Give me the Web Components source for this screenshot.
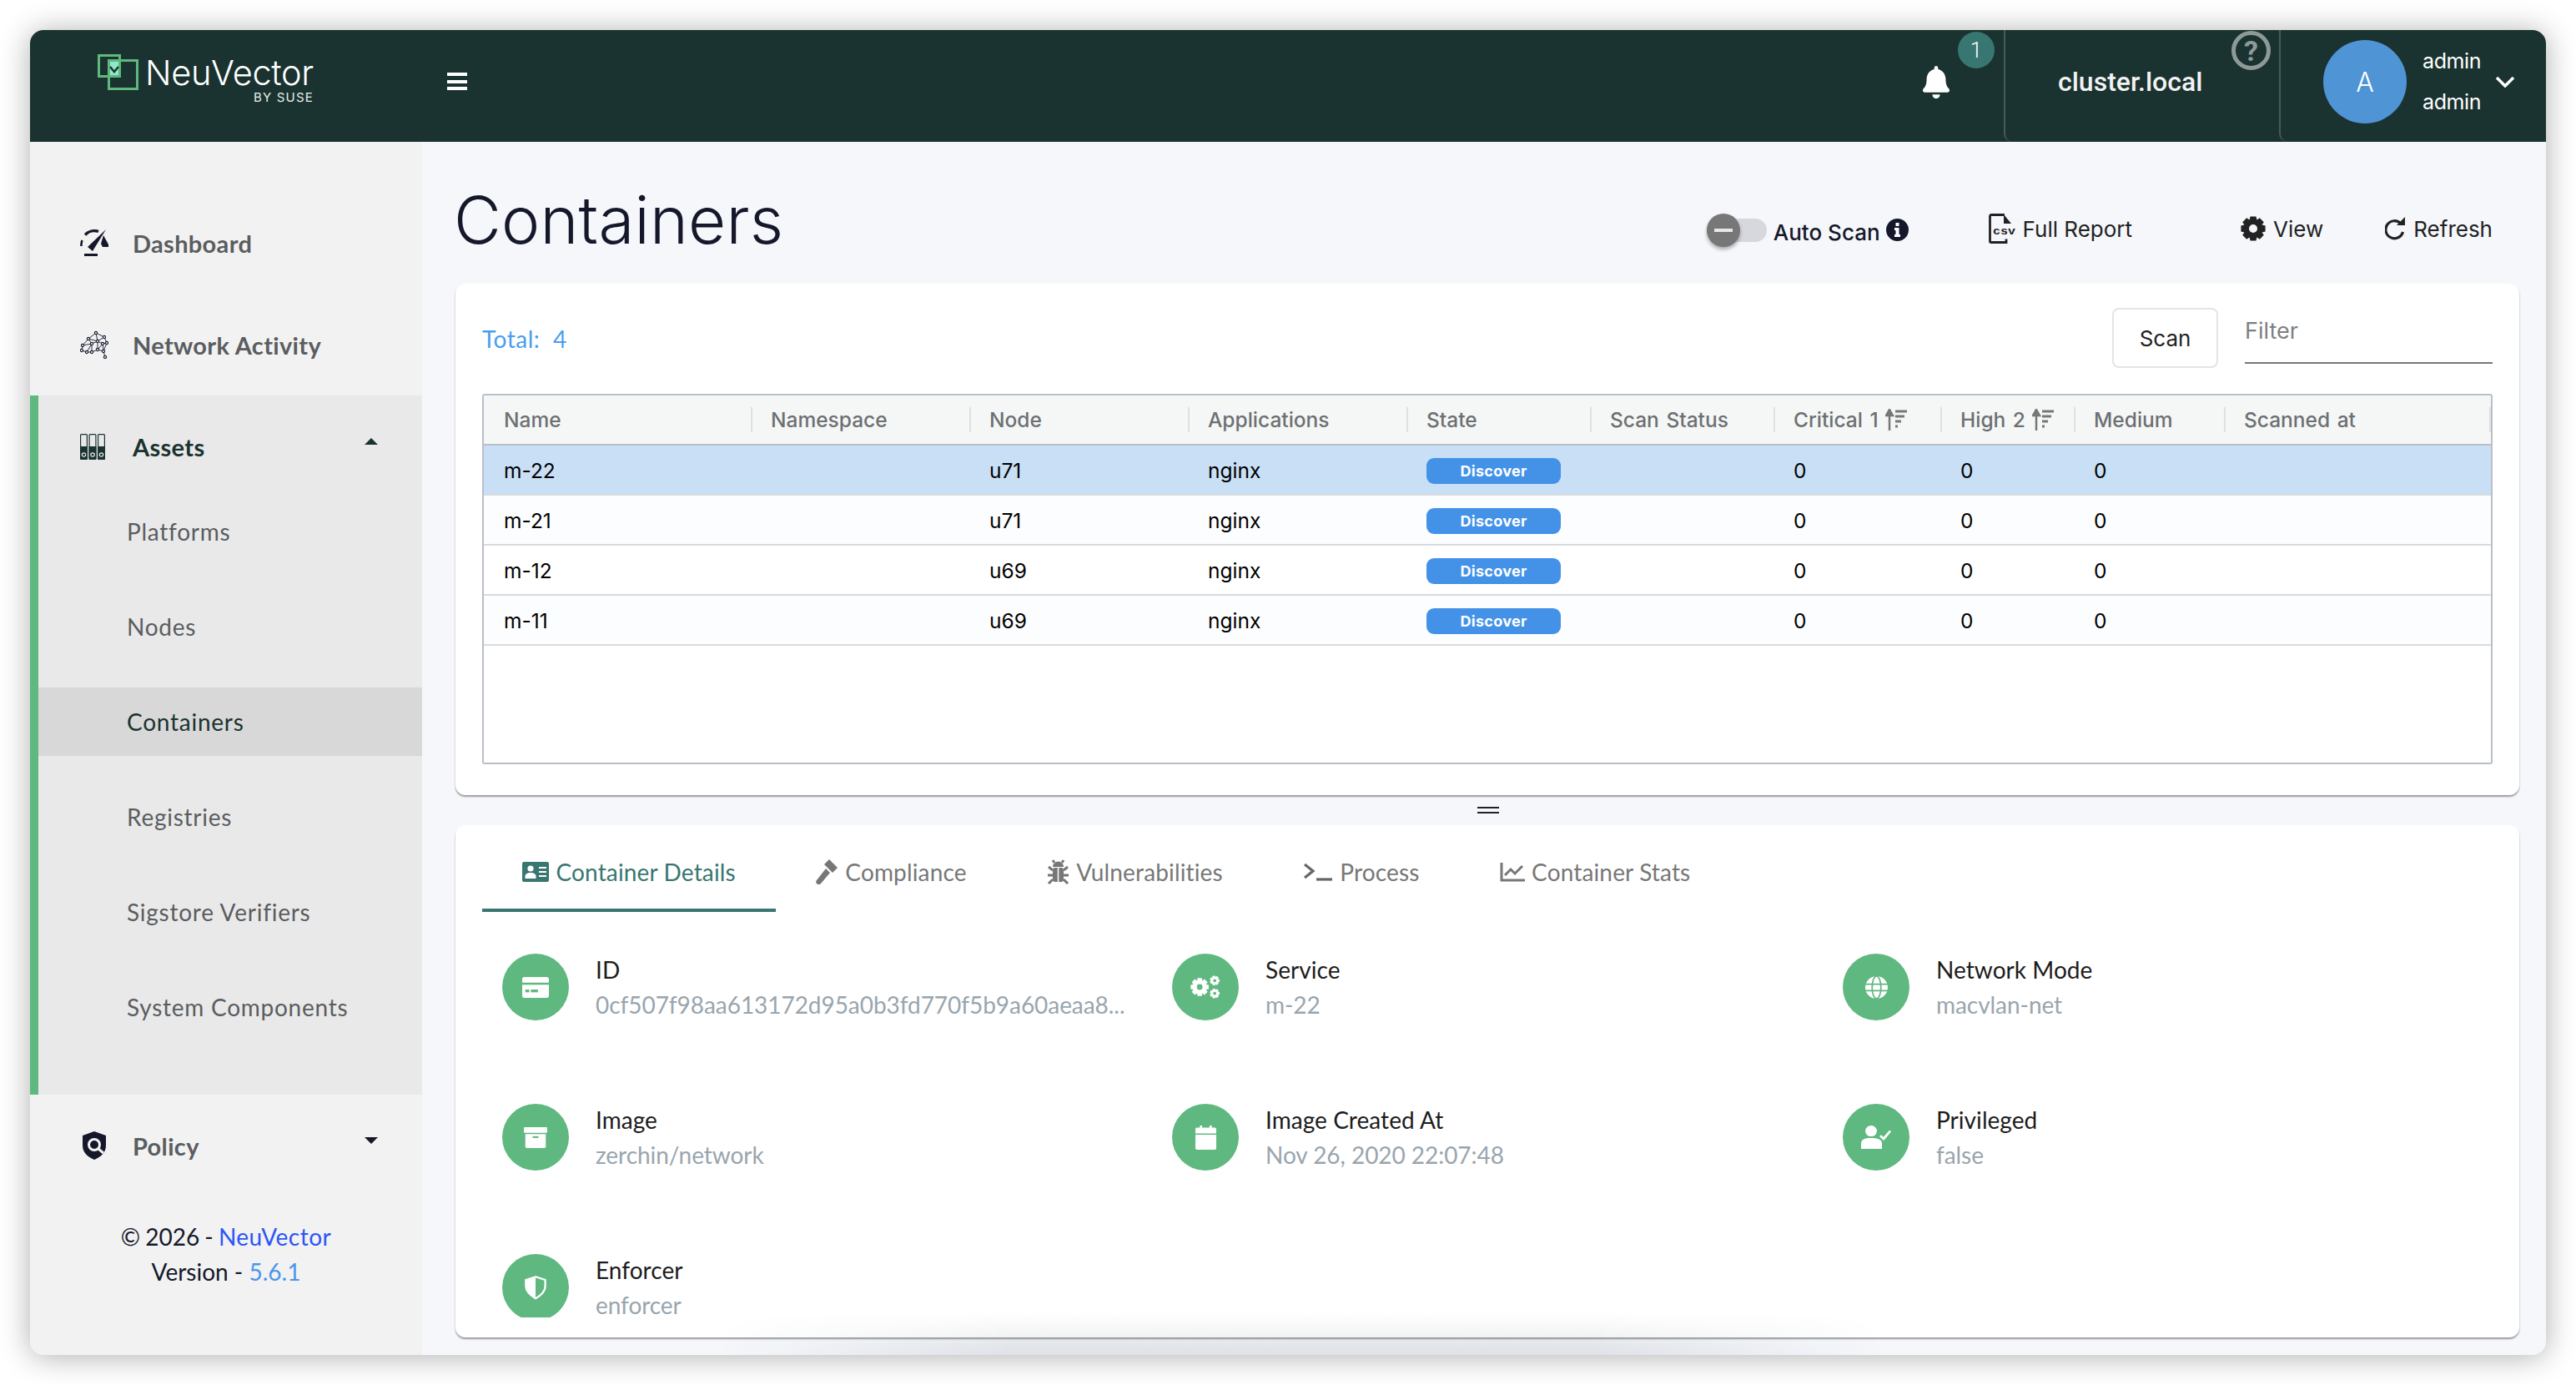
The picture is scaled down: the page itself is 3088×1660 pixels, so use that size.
<!doctype html>
<html lang="en">
<head>
<meta charset="utf-8">
<title>NeuVector Containers</title>
<style>
  html, body { margin: 0; background: #fff; }
  body { padding: 36px; width: 3016px; height: 1588px; font-family: "Lato", "Liberation Sans", sans-serif; overflow: hidden; }
</style>
</head>
<body>
<nv-app></nv-app>

<script>
/**
 * Builds a gear outline, used for the view icon and the service icon.
 *
 * @param {number} cx Centre x.
 * @param {number} cy Centre y.
 * @param {number} ro Outer radius.
 * @param {number} ri Radius at the tooth root.
 * @param {number} rh Radius of the hole.
 * @param {number} teeth Number of teeth.
 * @returns {string} The path data.
 */
function gear (cx, cy, ro, ri, rh, teeth) {
  const pts = []
  const step = Math.PI * 2 / teeth
  for (let i = 0; i < teeth; i++) {
    const a = i * step
    for (const [r, o] of [[ri, -0.5], [ro, -0.3], [ro, 0.3], [ri, 0.5]]) {
      pts.push((cx + r * Math.cos(a + o * step)).toFixed(2) + ' ' + (cy + r * Math.sin(a + o * step)).toFixed(2))
    }
  }
  return `M${pts.join('L')}Z M${cx - rh} ${cy}a${rh} ${rh} 0 1 0 ${rh * 2} 0a${rh} ${rh} 0 1 0 ${-rh * 2} 0Z`
}

const brainLinks = [[3, 18, 10, 10], [10, 10, 19, 3], [19, 3, 29, 8], [10, 10, 21, 13], [19, 3, 21, 13], [29, 8, 21, 13], [29, 8, 32, 15], [3, 18, 14, 16], [14, 16, 21, 13], [10, 10, 14, 16], [3, 18, 2, 24], [2, 24, 8, 26], [8, 26, 14, 26], [14, 16, 14, 26], [14, 16, 8, 26], [21, 13, 21, 23], [14, 26, 21, 23], [21, 23, 28, 25], [32, 15, 28, 25], [21, 13, 27, 16], [27, 16, 32, 15], [27, 16, 28, 25], [27, 16, 21, 23], [28, 25, 30, 32]]
const brainNodes = [[3, 18], [10, 10], [19, 3], [29, 8], [21, 13], [32, 15], [14, 16], [2, 24], [8, 26], [14, 26], [21, 23], [28, 25], [27, 16], [30, 32]]

const ICONS = {
  dashboard: `<svg viewBox="0 0 34 32" width="34" height="32"><path d="M2.500 13a15 15 0 0 0-1 7" fill="none" stroke="#15182a" stroke-width="2.600"/><path d="M6 6.500A15 15 0 0 1 22 2.500" fill="none" stroke="#15182a" stroke-width="3.400"/><path d="M28 7l6 11v3h-7l-2-4z" fill="#15182a"/><path d="M9 21L31 0 15 26z" fill="#15182a"/><path d="M5 30.500h16" stroke="#15182a" stroke-width="3" fill="none"/></svg>`,
  network: `<svg viewBox="0 0 34 34" width="34" height="34"><g stroke="#15182a" stroke-width="0.900" fill="none">${brainLinks.map(l => `<line x1="${l[0]}" y1="${l[1]}" x2="${l[2]}" y2="${l[3]}"/>`).join('')}</g><g stroke="#15182a" stroke-width="1.100" fill="#f2f2f3">${brainNodes.map(n => `<circle cx="${n[0]}" cy="${n[1]}" r="1.600"/>`).join('')}</g></svg>`,
  assets: `<svg viewBox="0 0 30 31" width="30" height="31"><g>${[0, 10.5, 21].map(x => `<rect x="${x + 0.6}" y="0.600" width="7.800" height="29.800" rx="1" fill="#e9e9ea" stroke="#1a3330" stroke-width="1.200"/><path d="M${x} 15h9v15a1 1 0 0 1-1 1h-7a1 1 0 0 1-1-1z" fill="#1a3330"/><circle cx="${x + 4.5}" cy="25" r="2.200" fill="none" stroke="#e9e9ea" stroke-width="1.200"/>`).join('')}</g></svg>`,
  policy: `<svg viewBox="0 0 28 34" width="28" height="34"><path d="M14 0L28 5v12c0 9-7 14-14 17C7 31 0 26 0 17V5z" fill="#15182a"/><circle cx="14" cy="16" r="6.500" fill="#15182a" stroke="#f2f2f3" stroke-width="3"/><path d="M19 21l6 5" stroke="#f2f2f3" stroke-width="3"/></svg>`,
  bell: `<svg viewBox="0 0 448 512" width="32" height="39" preserveAspectRatio="none"><path fill="#fff" d="M224 512c35.32 0 63.97-28.65 63.97-64H160.03c0 35.35 28.65 64 63.97 64zm215.39-149.71c-19.32-20.76-55.47-51.99-55.47-154.29 0-77.7-54.48-139.9-127.94-155.16V32c0-17.67-14.32-32-31.98-32s-31.98 14.33-31.98 32v20.84C118.56 68.1 64.08 130.3 64.08 208c0 102.3-36.15 133.53-55.47 154.29-6 6.45-8.66 14.16-8.61 21.71.11 16.4 12.98 32 32.1 32h383.8c19.12 0 32-15.6 32.1-32 .05-7.55-2.61-15.27-8.61-21.71z"/></svg>`,
  info: `<svg viewBox="0 0 27 27" width="27" height="27"><circle cx="13.500" cy="13.500" r="13.500" fill="#15182a"/><rect x="11.500" y="5" width="4" height="4" fill="#fff"/><path d="M10 11h5.500v8H17v3h-7v-3h1.500v-5H10z" fill="#fff"/></svg>`,
  csv: `<svg viewBox="0 0 32 36" width="32" height="36"><path d="M19 1.500H3a1.500 1.500 0 0 0-1.500 1.500v30a1.500 1.500 0 0 0 1.500 1.500h18v-4" fill="none" stroke="#222" stroke-width="2.800"/><path d="M18 1l9 11h-9z" fill="#222"/><text x="5" y="25" font-family="Liberation Mono, monospace" font-weight="700" font-size="13" textLength="27" lengthAdjust="spacingAndGlyphs" fill="#222">csv</text></svg>`,
  gear: `<svg viewBox="0 0 30 30" width="30" height="30"><path fill-rule="evenodd" fill="#222" d="${gear(15, 15, 15, 11.5, 5, 8)}"/></svg>`,
  refresh: `<svg viewBox="0 0 25 28" width="25" height="28"><path d="M20 7A10.500 10.500 0 1 0 22.500 17" fill="none" stroke="#222" stroke-width="3.200" transform="translate(-1 1)"/><path d="M24 0v10H14z" fill="#222"/></svg>`,
  idcard: `<svg viewBox="0 0 32 24" width="32" height="24"><rect width="32" height="24" rx="2" fill="#387672"/><circle cx="10" cy="8" r="3.600" fill="#fff"/><path d="M3.500 20v-2.500c0-3 2.500-4.500 6.500-4.500s6.500 1.500 6.500 4.500V20z" fill="#fff"/><path d="M20 7h9M20 12h9M20 17h9" stroke="#fff" stroke-width="2"/></svg>`,
  gavel: `<svg viewBox="0 0 27 30" width="27" height="30"><path d="M16 0l10 10-6 6-10-10z" fill="#777"/><path d="M12 11l5 5L6 29a3 3 0 0 1-5-4z" fill="#777"/></svg>`,
  bug: `<svg viewBox="0 0 27 30" width="27" height="30"><path d="M7 9a6.500 6.500 0 0 1 13 0z" fill="#777"/><rect x="7" y="10" width="13" height="17" rx="3" fill="#777"/><path d="M13.500 10v18" stroke="#fff" stroke-width="1.500"/><path d="M7 13L2 9M20 13l5-4M7 19H1M20 19h6M7 24l-5 5M20 24l5 5M9 4L7 1M18 4l2-3" stroke="#777" stroke-width="3" fill="none"/></svg>`,
  terminal: `<svg viewBox="0 0 36 24" width="36" height="24"><path d="M2 3l10 8-10 8" fill="none" stroke="#666" stroke-width="3.200"/><path d="M16 21h19" stroke="#666" stroke-width="3.200"/></svg>`,
  chart: `<svg viewBox="0 0 30 24" width="30" height="24"><path d="M2 1v21h28" fill="none" stroke="#777" stroke-width="3"/><path d="M6 16l7-7 5 5 9-9" fill="none" stroke="#777" stroke-width="3"/></svg>`,
  card: `<svg viewBox="0 0 34 30" width="32" height="25" preserveAspectRatio="none"><path d="M3 0h28a3 3 0 0 1 3 3v5H0V3a3 3 0 0 1 3-3z" fill="#fff"/><path d="M0 11h34v16a3 3 0 0 1-3 3H3a3 3 0 0 1-3-3z" fill="#fff"/><rect x="4" y="18" width="5" height="4" fill="#5fb87f"/><rect x="11" y="18" width="9" height="4" fill="#5fb87f"/></svg>`,
  cogs: `<svg viewBox="0 0 42 32" width="36" height="28"><path fill-rule="evenodd" fill="#fff" d="${gear(13, 16, 13, 9.5, 4, 8)}"/><path fill-rule="evenodd" fill="#fff" d="${gear(34, 7, 7, 5, 2.2, 7)}"/><path fill-rule="evenodd" fill="#fff" d="${gear(34, 25, 7, 5, 2.2, 7)}"/></svg>`,
  globe: `<svg viewBox="0 0 28 28" width="27" height="27"><circle cx="14" cy="14" r="14" fill="#fff"/><g fill="none" stroke="#5fb87f" stroke-width="1.800"><ellipse cx="14" cy="14" rx="5.500" ry="14"/><path d="M0 10h28M0 18h28"/></g></svg>`,
  archive: `<svg viewBox="0 0 32 30" width="28" height="25" preserveAspectRatio="none"><rect width="32" height="8" rx="1.500" fill="#fff"/><path d="M2 10h28v18a2 2 0 0 1-2 2H4a2 2 0 0 1-2-2z" fill="#fff"/><rect x="12" y="13" width="8" height="2.500" fill="#5fb87f"/></svg>`,
  calendar: `<svg viewBox="0 0 28 34" width="25" height="29" preserveAspectRatio="none"><rect x="6" y="0" width="3" height="6" fill="#fff"/><rect x="19" y="0" width="3" height="6" fill="#fff"/><path d="M2 3h24a2 2 0 0 1 2 2v6H0V5a2 2 0 0 1 2-2z" fill="#fff"/><path d="M0 13h28v19a2 2 0 0 1-2 2H2a2 2 0 0 1-2-2z" fill="#fff"/></svg>`,
  usercheck: `<svg viewBox="0 0 36 30" width="36" height="28" preserveAspectRatio="none"><circle cx="12" cy="7" r="7" fill="#fff"/><path d="M0 30v-7c0-5 4-7 12-7s13 2 13 7v7z" fill="#fff"/><path d="M23 13l4 4 8-10" fill="none" stroke="#fff" stroke-width="3"/></svg>`,
  shield: `<svg viewBox="0 0 28 34" width="26" height="29" preserveAspectRatio="none"><path d="M14 1.500L26.500 6v9c0 8-6 13-12.500 17C8 28 1.500 23 1.500 15V6z" fill="none" stroke="#fff" stroke-width="2.500"/><path d="M14 1.500L1.500 6v9c0 8 6 13 12.500 17z" fill="#fff"/></svg>`,
  sort: `<svg viewBox="0 0 26 26" width="26" height="26"><path d="M5 26V6M1 8l4-7 4 7z" stroke="#777" stroke-width="2.500" fill="#777"/><path d="M12 3h14M12 9h11M12 15h7M12 21h3" stroke="#777" stroke-width="3"/></svg>`
}

const logoSvg = `<svg viewBox="0 0 50 44" width="50" height="44"><rect x="1.500" y="1.500" width="25" height="25" fill="none" stroke="#5fb87f" stroke-width="3"/><rect x="13.500" y="7.500" width="34" height="34" fill="none" stroke="#5fb87f" stroke-width="3"/><path d="M15 9h10v16H15z" fill="#8fe9c8"/><path d="M15 15l5 6 5-6" fill="none" stroke="#1a3330" stroke-width="2.500"/></svg>`

customElements.define('nv-logo',
  /**
   * The product mark with its name.
   */
  class extends HTMLElement {
    /**
     * Creates an instance of current type.
     */
    constructor () {
      super()
      this.attachShadow({ mode: 'open' }).innerHTML = `
        <style>
          :host { display: flex; align-items: flex-start; gap: 7px; }
          svg { display: block; margin-top: 29px; }
          .name { display: flex; flex-direction: column; align-items: flex-end; margin-top: 30px; color: #fff; font-family: "Inter", sans-serif; }
          .big { font-size: 41.500px; font-weight: 300; line-height: 42px; letter-spacing: -0.3px; }
          .small { font-size: 15px; line-height: 18px; letter-spacing: 1.200px; color: #e8eeec; }
        </style>
        ${logoSvg}
        <div class="name"><span class="big">NeuVector</span><span class="small">BY SUSE</span></div>`
    }
  }
)

customElements.define('nv-header',
  /**
   * The dark bar on top of the window.
   */
  class extends HTMLElement {
    /**
     * Creates an instance of current type.
     */
    constructor () {
      super()
      this.attachShadow({ mode: 'open' }).innerHTML = `
        <style>
          :host { display: flex; height: 134px; background: #1a3330; color: #fff; font-family: "Roboto", sans-serif; }
          nv-logo { margin-left: 81px; }
          .burger { width: 24px; height: 21px; margin: 51px 0 0 160px; background: repeating-linear-gradient(#fff 0 4px, transparent 4px 8.500px); }
          .fill { flex: 1; }
          .bell { position: relative; width: 97px; }
          .bell svg { display: block; margin: 43px 0 0 0; }
          .count { position: absolute; left: 42px; top: 2px; width: 44px; height: 44px; border-radius: 50%; background: #387672; display: flex; align-items: center; justify-content: center; font-size: 26px; font-weight: 300; }
          .cluster { position: relative; box-sizing: border-box; width: 330px; border-left: 2px solid #465a58; border-bottom-left-radius: 10px; padding: 0 0 10px 63px; display: flex; align-items: center; font-size: 32px; font-weight: 500; color: #f2f2f2; }
          .help { position: absolute; left: 271px; top: 1px; width: 47px; height: 47px; box-sizing: border-box; border: 5px solid #8d9a98; border-radius: 50%; color: #8d9a98; display: flex; align-items: center; justify-content: center; font-size: 34px; font-weight: 700; }
          .user { box-sizing: border-box; width: 320px; border-left: 2px solid #465a58; border-bottom-left-radius: 10px; display: flex; align-items: center; padding: 0 0 10px 51px; }
          .avatar { width: 100px; height: 100px; border-radius: 50%; background: #4f94d4; display: flex; align-items: center; justify-content: center; font-size: 32px; font-family: "Inter", sans-serif; font-weight: 300; flex: none; }
          .who { margin-left: 19px; font-size: 25px; line-height: 49px; font-family: "Inter", sans-serif; font-weight: 400; letter-spacing: -0.4px; }
          .who div { height: 49px; }
          .chev { margin-left: 17px; }
        </style>
        <nv-logo></nv-logo>
        <div class="burger"></div>
        <div class="fill"></div>
        <div class="bell">${ICONS.bell}<span class="count">1</span></div>
        <div class="cluster">cluster.local<span class="help">?</span></div>
        <div class="user">
          <div class="avatar">A</div>
          <div class="who"><div>admin</div><div>admin</div></div>
          <svg class="chev" viewBox="0 0 24 14" width="24" height="14"><path d="M2 2l10 10L22 2" fill="none" stroke="#fff" stroke-width="3.500"/></svg>
        </div>`
    }
  }
)

customElements.define('nv-nav-item',
  /**
   * A row in the side menu. Top level rows carry an icon, sub rows do not.
   */
  class extends HTMLElement {
    /**
     * Creates an instance of current type.
     */
    connectedCallback () {
      const icon = this.getAttribute('icon')
      const caret = this.getAttribute('caret')
      this.attachShadow({ mode: 'open' }).innerHTML = `
        <style>
          :host { display: flex; align-items: center; height: 122px; padding-left: 59px; font-size: 29px; font-weight: 700; color: #5a5d5f; letter-spacing: 0.33px; position: relative; }
          :host([sub]) { height: 82px; padding-left: 106px; font-size: 28px; font-weight: 400; letter-spacing: 0.75px; }
          :host([active]) { background: #d8d8d9; color: #1a3330; }
          :host([open]) { color: #1a3330; padding-left: 47px; }
          .ico { width: 36px; margin-right: 28px; display: flex; justify-content: center; flex: none; }
          :host([open]) .ico { margin-right: 30px; }
          svg { display: block; }
          .caret { width: 0; height: 0; border: 8px solid transparent; margin-left: auto; margin-right: 53px; margin-top: -12px; }
          .down { border-top: 8px solid #15182a; border-bottom: 0; }
          .up { border-bottom: 8px solid #1a3330; border-top: 0; }
        </style>
        ${icon ? `<span class="ico">${ICONS[icon]}</span>` : ''}
        <slot></slot>
        ${caret ? `<span class="caret ${caret}"></span>` : ''}`
    }
  }
)

customElements.define('nv-sidebar',
  /**
   * The side menu with its version footer.
   */
  class extends HTMLElement {
    /**
     * Creates an instance of current type.
     */
    constructor () {
      super()
      this.attachShadow({ mode: 'open' }).innerHTML = `
        <style>
          :host { display: block; width: 470px; flex: none; background: #f2f2f3; padding-top: 60px; box-sizing: border-box; }
          .group { background: #e9e9ea; border-left: 10px solid #5fb87f; padding-bottom: 64px; }
          .subs { display: flex; flex-direction: column; gap: 32px; }
          footer { margin-top: 27px; text-align: center; font-size: 28px; line-height: 42px; color: #15182a; }
          .nv { color: #2c55f5; letter-spacing: 0.5px; }
          .ver { color: #4a96ea; }
          .cp { word-spacing: -1px; }
        </style>
        <nv-nav-item icon="dashboard">Dashboard</nv-nav-item>
        <nv-nav-item icon="network">Network Activity</nv-nav-item>
        <div class="group">
          <nv-nav-item icon="assets" caret="up" open>Assets</nv-nav-item>
          <div class="subs">
            <nv-nav-item sub>Platforms</nv-nav-item>
            <nv-nav-item sub>Nodes</nv-nav-item>
            <nv-nav-item sub active>Containers</nv-nav-item>
            <nv-nav-item sub>Registries</nv-nav-item>
            <nv-nav-item sub>Sigstore Verifiers</nv-nav-item>
            <nv-nav-item sub>System Components</nv-nav-item>
          </div>
        </div>
        <nv-nav-item icon="policy" caret="down">Policy</nv-nav-item>
        <footer>
          <div class="cp">© 2026 - <span class="nv">NeuVector</span></div>
          <div>Version - <span class="ver">5.6.1</span></div>
        </footer>`
    }
  }
)

customElements.define('nv-page-head',
  /**
   * Page title and the actions next to it.
   */
  class extends HTMLElement {
    /**
     * Creates an instance of current type.
     */
    constructor () {
      super()
      this.attachShadow({ mode: 'open' }).innerHTML = `
        <style>
          :host { display: flex; height: 170px; box-sizing: border-box; padding-right: 32px; font-family: "Inter", sans-serif; color: #222; font-size: 26px; }
          h1 { margin: 44px 0 0 -2px; font-size: 78px; line-height: 100px; font-weight: 300; color: #15182a; letter-spacing: 0.2px; }
          .acts { margin-left: auto; display: flex; align-items: center; height: 80px; margin-top: 66px; }
          .track { width: 72px; height: 28px; border-radius: 14px; background: #d6d8de; position: relative; margin-right: 8px; }
          .thumb { position: absolute; left: 0; top: -6px; width: 40px; height: 40px; border-radius: 50%; background: #777; box-shadow: 0 3px 4px rgba(0,0,0,.3); display: flex; align-items: center; justify-content: center; }
          .thumb i { width: 22px; height: 4px; background: #e8e8e8; }
          .auto { font-weight: 500; color: #15182a; margin-top: 4px; }
          .act { display: flex; align-items: center; gap: 9px; margin-top: -4px; }
          .act svg { flex: none; }
          .info { margin-left: 7px; margin-top: 4px; display: block; }
        </style>
        <h1>Containers</h1>
        <div class="acts">
          <div class="track"><div class="thumb"><i></i></div></div>
          <span class="auto">Auto Scan</span><span class="info">${ICONS.info}</span>
          <div class="act" style="margin-left:96px">${ICONS.csv}<span>Full Report</span></div>
          <div class="act" style="margin-left:130px">${ICONS.gear}<span>View</span></div>
          <div class="act" style="margin-left:74px">${ICONS.refresh}<span>Refresh</span></div>
        </div>`
    }
  }
)

customElements.define('nv-state-badge',
  /**
   * Small pill that shows the state of a container.
   */
  class extends HTMLElement {
    /**
     * Creates an instance of current type.
     */
    constructor () {
      super()
      this.attachShadow({ mode: 'open' }).innerHTML = `
        <style>
          :host { display: flex; align-items: center; justify-content: center; width: 161px; height: 31px; border-radius: 9px; background: #4392e8; color: #fff; font-size: 18px; font-weight: 700; letter-spacing: 0.3px; }
        </style>
        <slot></slot>`
    }
  }
)

customElements.define('nv-grid',
  /**
   * The containers table.
   */
  class extends HTMLElement {
    /**
     * Creates an instance of current type.
     */
    constructor () {
      super()
      const cols = [
        ['Name'], ['Namespace'], ['Node'], ['Applications'], ['State'], ['Scan Status'],
        ['Critical 1', true], ['High 2', true], ['Medium'], ['Scanned at']
      ]
      const rows = [
        ['m-22', 'u71'], ['m-21', 'u71'], ['m-12', 'u69'], ['m-11', 'u69']
      ]
      const head = cols.map(([t, s], i) => `<div class="hc${i === cols.length - 1 ? ' last' : ''}${i === 0 ? ' first' : ''}">${t}${s ? ICONS.sort : ''}</div>`).join('')
      const body = rows.map(([name, node], i) => `
        <div class="row${i === 0 ? ' sel' : ''}${i % 2 ? ' odd' : ''}">
          <div>${name}</div><div></div><div>${node}</div><div>nginx</div>
          <div><nv-state-badge>Discover</nv-state-badge></div><div></div>
          <div>0</div><div>0</div><div>0</div><div></div>
        </div>`).join('')
      this.attachShadow({ mode: 'open' }).innerHTML = `
        <style>
          :host { display: block; height: 444px; box-sizing: border-box; border: 2px solid #babfc7; border-radius: 3px; font-family: "Inter", sans-serif; font-size: 24.500px; color: #000; }
          .head, .row { display: grid; grid-template-columns: 320px 262px 262px 262px 220px 220px 200px 160px 180px 320px; }
          .head { height: 60px; box-sizing: border-box; border-bottom: 2px solid #babfc7; background: #f5f7f7; color: #6d7072; font-weight: 500; }
          .hc { display: flex; align-items: center; gap: 8px; padding-left: 24px; word-spacing: 2px; background: linear-gradient(#dde1e3, #dde1e3) left center / 2px 30px no-repeat; }
          .hc.first { background: none; }
          .hc.last { background: linear-gradient(#dde1e3, #dde1e3) left center / 2px 30px no-repeat, linear-gradient(#dde1e3, #dde1e3) right center / 2px 30px no-repeat; }
          .row { height: 60px; box-sizing: border-box; border-bottom: 2px solid #d8dbde; background: #fff; }
          .row.odd { background: #fcfdfe; }
          .row.sel { background: #c8dff5; }
          .row > div { display: flex; align-items: center; padding: 2px 0 0 24px; }
        </style>
        <div class="head">${head}</div>
        ${body}`
    }
  }
)

customElements.define('nv-card',
  /**
   * White panel with a soft edge.
   */
  class extends HTMLElement {
    /**
     * Creates an instance of current type.
     */
    constructor () {
      super()
      this.attachShadow({ mode: 'open' }).innerHTML = `
        <style>
          :host { display: block; background: #fff; border-radius: 12px; box-shadow: 0 2px 2px rgba(0,0,0,.38); }
        </style>
        <slot></slot>`
    }
  }
)

customElements.define('nv-toolbar',
  /**
   * Total count, scan button and filter above the table.
   */
  class extends HTMLElement {
    /**
     * Creates an instance of current type.
     */
    constructor () {
      super()
      this.attachShadow({ mode: 'open' }).innerHTML = `
        <style>
          :host { display: flex; align-items: flex-start; height: 132px; box-sizing: border-box; padding-top: 29px; font-family: "Inter", sans-serif; }
          .total { margin-top: 19px; color: #4a9df0; font-family: "Lato", sans-serif; font-size: 28px; line-height: 36px; word-spacing: 8px; letter-spacing: 0.5px; }
          button { margin-left: auto; width: 127px; height: 72px; border: 2px solid #e2e4e6; border-radius: 8px; background: #fff; font: 400 26px "Inter", sans-serif; color: #222; padding: 0; }
          .filter { margin-left: 32px; width: 297px; height: 67px; box-sizing: border-box; border-bottom: 2px solid #777; color: #7c7f82; font-size: 27px; line-height: 56px; }
        </style>
        <span class="total">Total: 4</span>
        <button>Scan</button>
        <div class="filter">Filter</div>`
    }
  }
)

customElements.define('nv-tabs',
  /**
   * Tab strip of the details panel.
   */
  class extends HTMLElement {
    /**
     * Creates an instance of current type.
     */
    constructor () {
      super()
      const tabs = [
        ['idcard', 'Container Details'], ['gavel', 'Compliance'], ['bug', 'Vulnerabilities'],
        ['terminal', 'Process'], ['chart', 'Container Stats']
      ]
      this.attachShadow({ mode: 'open' }).innerHTML = `
        <style>
          :host { display: flex; height: 104px; box-sizing: border-box; padding: 0 32px; font-family: "Lato", sans-serif; font-size: 28px; color: #777; }
          .tab { display: flex; align-items: center; gap: 8.500px; padding: 12px 48px 0; box-sizing: border-box; height: 104px; border-bottom: 4px solid transparent; letter-spacing: 0.15px; }
          .tab.on { color: #387672; border-bottom-color: #387672; }
          svg { display: block; flex: none; }
        </style>
        ${tabs.map(([i, t], n) => `<div class="tab${n === 0 ? ' on' : ''}">${ICONS[i]}<span>${t}</span></div>`).join('')}`
    }
  }
)

customElements.define('nv-detail',
  /**
   * One fact about the container with a round green icon.
   */
  class extends HTMLElement {
    /**
     * Creates an instance of current type.
     */
    connectedCallback () {
      this.attachShadow({ mode: 'open' }).innerHTML = `
        <style>
          :host { display: flex; align-items: flex-start; gap: 32px; font-family: "Lato", sans-serif; font-size: 28px; line-height: 36px; }
          :host([cut]) .dot { clip-path: inset(0 0 4px 0); }
          .dot { width: 80px; height: 80px; border-radius: 50%; background: #5fb87f; display: flex; align-items: center; justify-content: center; flex: none; }
          .text { padding-top: 1px; }
          .label { color: #1c1c1c; letter-spacing: 0.05px; }
          .value { color: #99a5ae; margin-top: 10px; line-height: 28px; letter-spacing: -0.05px; }
          svg { display: block; }
        </style>
        <div class="dot">${ICONS[this.getAttribute('icon')]}</div>
        <div class="text">
          <div class="label">${this.getAttribute('label')}</div>
          <div class="value"><slot></slot></div>
        </div>`
    }
  }
)

customElements.define('nv-app',
  /**
   * The whole window.
   */
  class extends HTMLElement {
    /**
     * Creates an instance of current type.
     */
    constructor () {
      super()
      this.attachShadow({ mode: 'open' }).innerHTML = `
        <style>
          :host { display: flex; flex-direction: column; position: relative; width: 3016px; height: 1588px; border-radius: 16px; overflow: hidden; background: #f5f7fb; box-shadow: 0 2px 36px rgba(0,0,0,.32); }
          .body { flex: 1; display: flex; min-height: 0; }
          main { flex: 1; min-width: 0; padding: 0 32px 0 40px; }
          .top { padding: 0 32px 37px; }
          .split { height: 36px; display: flex; align-items: center; justify-content: center; }
          .split i { width: 26px; height: 8px; border-top: 2px solid #222; border-bottom: 2px solid #222; margin-left: 2px; box-sizing: border-box; }
          .pane { height: 500px; box-sizing: border-box; padding: 50px 0 0 56px; display: grid; grid-template-columns: 803px 804px 1fr; grid-template-rows: 180px 180px 90px; }
          .bottom { height: 614px; }
          .smudge { position: absolute; left: 824px; width: 1400px; bottom: 0; height: 50px; pointer-events: none; background: linear-gradient(rgba(30,40,60,0), rgba(30,40,60,.1)); -webkit-mask-image: linear-gradient(90deg, transparent, #000 25%, #000 75%, transparent); }
        </style>
        <nv-header></nv-header>
        <div class="body">
          <nv-sidebar></nv-sidebar>
          <main>
            <nv-page-head></nv-page-head>
            <nv-card class="top">
              <nv-toolbar></nv-toolbar>
              <nv-grid></nv-grid>
            </nv-card>
            <div class="split"><i></i></div>
            <nv-card class="bottom">
              <nv-tabs></nv-tabs>
              <div class="pane">
                <nv-detail icon="card" label="ID">0cf507f98aa613172d95a0b3fd770f5b9a60aeaa8...</nv-detail>
                <nv-detail icon="cogs" label="Service">m-22</nv-detail>
                <nv-detail icon="globe" label="Network Mode">macvlan-net</nv-detail>
                <nv-detail icon="archive" label="Image">zerchin/network</nv-detail>
                <nv-detail icon="calendar" label="Image Created At">Nov 26, 2020 22:07:48</nv-detail>
                <nv-detail icon="usercheck" label="Privileged">false</nv-detail>
                <nv-detail icon="shield" label="Enforcer" cut>enforcer</nv-detail>
              </div>
            </nv-card>
          </main>
        </div>
        <div class="smudge"></div>`
    }
  }
)
</script>
</body>
</html>
